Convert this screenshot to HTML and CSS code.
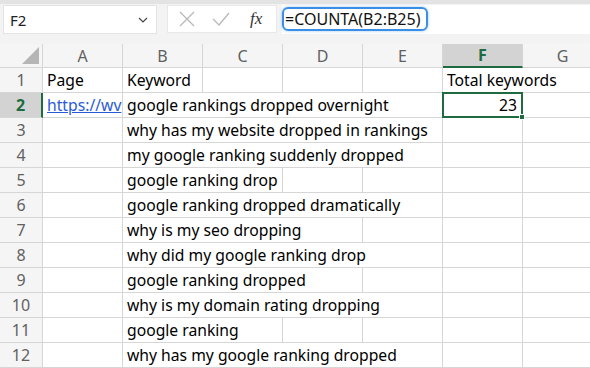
FILE: index.html
```html
<!DOCTYPE html>
<html lang="en">

<head>
    <meta charset="UTF-8">
    <title>Sheet</title>
    <link rel="stylesheet" href="styles.css">
</head>

<body>
    <div class="top-strip"></div>

    <!-- name box + formula bar -->
    <div class="toolbar">
        <div class="name-box">
            <span>F2</span>
            <svg class="chev" width="10" height="6" viewBox="0 0 10 6">
                <path d="M1 1 L5 5 L9 1" fill="none" stroke="#444" stroke-width="1.2" />
            </svg>
        </div>
        <div class="fx-box">
            <svg width="18" height="18" viewBox="0 0 18 18">
                <path d="M2 2 L16 16 M16 2 L2 16" stroke="#b8b8b8" stroke-width="1.3" />
            </svg>
            <svg width="20" height="18" viewBox="0 0 20 18">
                <path d="M2 9 L8 15 L18 3" fill="none" stroke="#b8b8b8" stroke-width="1.3" />
            </svg>
            <span class="fx">fx</span>
        </div>
        <div class="formula">
            <span class="formula-pill">=COUNTA(B2:B25)</span>
        </div>
    </div>

    <div class="sheet">
        <!-- header row -->
        <div class="corner"><span class="tri"></span></div>
        <div class="col-h">A</div>
        <div class="col-h">B</div>
        <div class="col-h">C</div>
        <div class="col-h">D</div>
        <div class="col-h">E</div>
        <div class="col-h active">F</div>
        <div class="col-h">G</div>

        <!-- 1 -->
        <div class="row-h">1</div>
        <div class="cell">Page</div>
        <div class="cell">Keyword</div>
        <div class="cell"></div>
        <div class="cell"></div>
        <div class="cell"></div>
        <div class="cell span2">Total keywords</div>

        <!-- 2 -->
        <div class="row-h active">2</div>
        <div class="cell link"><a href="#">https://wv</a></div>
        <div class="cell span4">google rankings dropped overnight</div>
        <div class="cell num selected">23<span class="handle"></span></div>
        <div class="cell"></div>

        <!-- 3 -->
        <div class="row-h">3</div>
        <div class="cell"></div>
        <div class="cell span4">why has my website dropped in rankings</div>
        <div class="cell"></div>
        <div class="cell"></div>

        <!-- 4 -->
        <div class="row-h">4</div>
        <div class="cell"></div>
        <div class="cell span4">my google ranking suddenly dropped</div>
        <div class="cell"></div>
        <div class="cell"></div>

        <!-- 5 -->
        <div class="row-h">5</div>
        <div class="cell"></div>
        <div class="cell span2">google ranking drop</div>
        <div class="cell"></div>
        <div class="cell"></div>
        <div class="cell"></div>
        <div class="cell"></div>

        <!-- 6 -->
        <div class="row-h">6</div>
        <div class="cell"></div>
        <div class="cell span4">google ranking dropped dramatically</div>
        <div class="cell"></div>
        <div class="cell"></div>

        <!-- 7 -->
        <div class="row-h">7</div>
        <div class="cell"></div>
        <div class="cell span3">why is my seo dropping</div>
        <div class="cell"></div>
        <div class="cell"></div>
        <div class="cell"></div>

        <!-- 8 -->
        <div class="row-h">8</div>
        <div class="cell"></div>
        <div class="cell span4">why did my google ranking drop</div>
        <div class="cell"></div>
        <div class="cell"></div>

        <!-- 9 -->
        <div class="row-h">9</div>
        <div class="cell"></div>
        <div class="cell span3">google ranking dropped</div>
        <div class="cell"></div>
        <div class="cell"></div>
        <div class="cell"></div>

        <!-- 10 -->
        <div class="row-h">10</div>
        <div class="cell"></div>
        <div class="cell span4">why is my domain rating dropping</div>
        <div class="cell"></div>
        <div class="cell"></div>

        <!-- 11 -->
        <div class="row-h">11</div>
        <div class="cell"></div>
        <div class="cell span2">google ranking</div>
        <div class="cell"></div>
        <div class="cell"></div>
        <div class="cell"></div>
        <div class="cell"></div>

        <!-- 12 -->
        <div class="row-h">12</div>
        <div class="cell"></div>
        <div class="cell span4">why has my google ranking dropped</div>
        <div class="cell"></div>
        <div class="cell"></div>
    </div>
</body>

</html>
```

FILE: styles.css
```css
* {
    box-sizing: border-box;
}

body {
    margin: 0;
    width: 590px;
    height: 368px;
    overflow: hidden;
    background: #fff;
    font-family: "Noto Sans", "Open Sans", sans-serif;
}

.top-strip {
    height: 4px;
    background: #e3e3e3;
}

/* 名稱方塊與公式列 */
.toolbar {
    display: flex;
    height: 40px;
    padding: 1px 0 0 3px;
    background: #f3f3f3;
}

.name-box {
    width: 154px;
    height: 29px;
    background: #fff;
    border: 1px solid #e4e4e4;
    display: flex;
    align-items: center;
    justify-content: space-between;
    padding: 0 8px 0 6px;
    font-size: 15px;
    color: #222;
}

.fx-box {
    width: 110px;
    height: 28px;
    margin-left: 10px;
    background: #fff;
    border: 1px solid #e8e8e8;
    display: flex;
    align-items: center;
    padding-left: 10px;
    gap: 15px;
}

.fx {
    font-family: "Liberation Serif", serif;
    font-style: italic;
    font-size: 17px;
    color: #333;
    margin-left: 4px;
}

.formula {
    flex: 1;
    height: 29px;
    margin-left: 5px;
    background: #fff;
    padding-top: 2px;
}

.formula-pill {
    display: inline-block;
    height: 24px;
    line-height: 20px;
    padding: 0 6px 0 1px;
    border: 2px solid #3a8ee6;
    border-radius: 6px;
    box-shadow: 0 0 3px rgba(58, 142, 230, 0.5);
    font-size: 16px;
    color: #111;
}

/* 工作表格線 */
.sheet {
    display: grid;
    grid-template-columns: 43px repeat(7, 80px);
    grid-template-rows: 24px;
    grid-auto-rows: 25px;
    font-size: 15.7px;
}

.corner,
.col-h,
.row-h {
    background: #f5f5f5;
    color: #616161;
    border-right: 1px solid #d6d6d6;
    border-bottom: 1px solid #d6d6d6;
}

.corner {
    position: relative;
}

.corner .tri {
    position: absolute;
    right: 3px;
    bottom: 3px;
    width: 0;
    height: 0;
    border-left: 17px solid transparent;
    border-bottom: 17px solid #b5b5b5;
}

.col-h {
    display: flex;
    align-items: center;
    justify-content: center;
    font-size: 16px;
}

.col-h.active {
    background: #d3d3d3;
    color: #1e6b40;
    font-weight: bold;
    border-bottom: 2px solid #1e6b40;
}

.row-h {
    display: flex;
    align-items: center;
    justify-content: center;
    font-size: 16px;
}

.row-h.active {
    background: #d3d3d3;
    color: #1e6b40;
    font-weight: bold;
    border-right: 2px solid #1e6b40;
}

.cell {
    border-right: 1px solid #d6d6d6;
    border-bottom: 1px solid #d6d6d6;
    padding: 0 0 0 4px;
    line-height: 24px;
    white-space: nowrap;
    overflow: hidden;
    color: #000;
}

.span2 {
    grid-column: span 2;
}

.span3 {
    grid-column: span 3;
}

.span4 {
    grid-column: span 4;
}

.link a {
    color: #2a5bd7;
    text-decoration: underline;
}

.num {
    text-align: right;
    padding-right: 4px;
}

.selected {
    position: relative;
    overflow: visible;
    border: 2px solid #1e6b40;
    margin: -1px 0 0 -1px;
    line-height: 22px;
}

.selected .handle {
    position: absolute;
    right: -4px;
    bottom: -4px;
    width: 6px;
    height: 6px;
    background: #1e6b40;
    border: 1px solid #fff;
}
```
